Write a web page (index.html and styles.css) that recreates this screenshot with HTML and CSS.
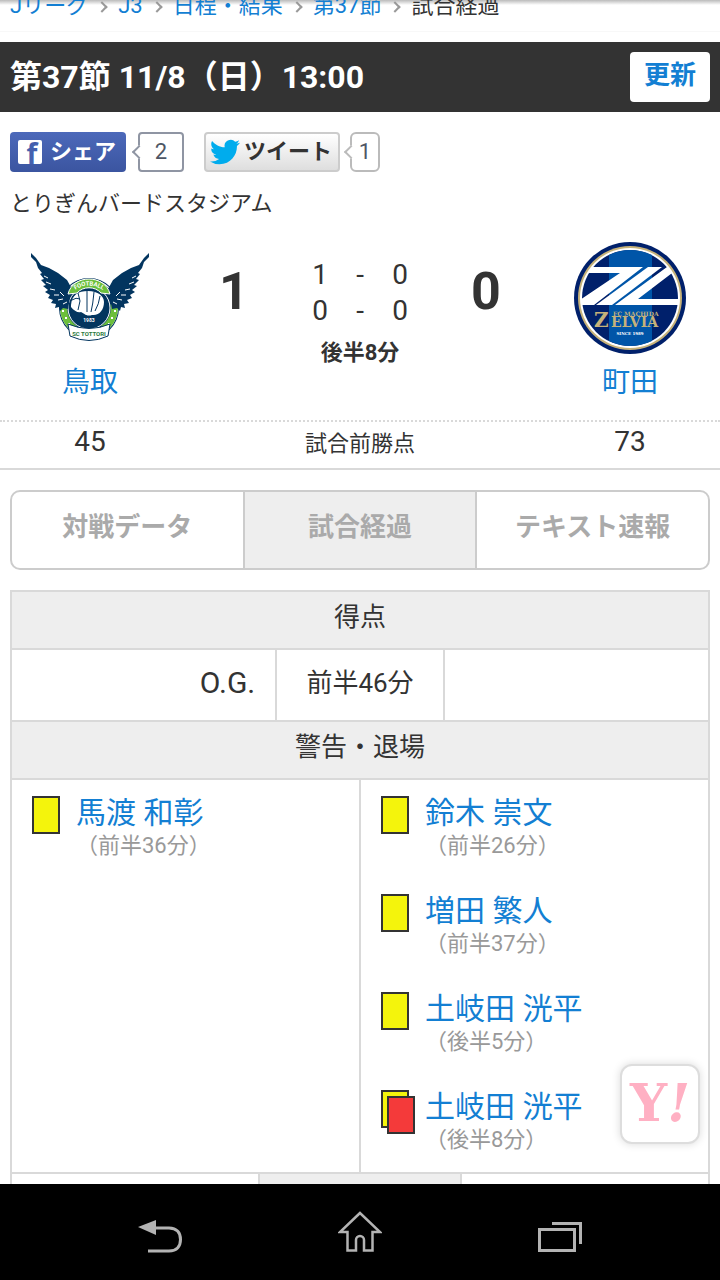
FILE: index.html
```html
<!DOCTYPE html>
<html lang="ja">

<head>
    <meta charset="utf-8">
    <meta name="viewport" content="width=device-width">
    <title>第37節 鳥取 町田</title>
    <link rel="stylesheet" href="styles.css">
</head>

<body>
    <main class="page">
        <nav class="crumbs">
            <a href="#">Jリーグ</a>
            <a href="#">J3</a>
            <a href="#">日程・結果</a>
            <a href="#">第37節</a>
            <span>試合経過</span>
        </nav>

        <header class="head">
            <h1>第37節 11/8（日）13:00</h1>
            <button type="button" class="reload">更新</button>
        </header>

        <div class="social">
            <button type="button" class="fb"><span class="fb-mark">f</span>シェア</button>
            <span class="count fb-count">2</span>
            <button type="button" class="tw">
                <svg viewBox="0 0 24 24" width="30" height="30">
                    <path fill="#00aced" d="M23.953 4.57a10 10 0 01-2.825.775 4.958 4.958 0 002.163-2.723c-.951.555-2.005.959-3.127 1.184a4.92 4.92 0 00-8.384 4.482C7.69 8.095 4.067 6.13 1.64 3.162a4.822 4.822 0 00-.666 2.475c0 1.71.87 3.213 2.188 4.096a4.904 4.904 0 01-2.228-.616v.06a4.923 4.923 0 003.946 4.827 4.996 4.996 0 01-2.212.085 4.936 4.936 0 004.604 3.417 9.867 9.867 0 01-6.102 2.105c-.39 0-.779-.023-1.17-.067a13.995 13.995 0 007.557 2.209c9.053 0 13.998-7.496 13.998-13.985 0-.21 0-.42-.015-.63A9.935 9.935 0 0024 4.59z" />
                </svg>ツイート</button>
            <span class="count tw-count">1</span>
        </div>

        <p class="stadium">とりぎんバードスタジアム</p>

        <section class="match">
            <div class="team">
                <svg class="emblem" viewBox="0 0 120 120">
                    <circle cx="59" cy="70" r="30" fill="#03355f" />
                    <circle cx="59" cy="70" r="29" fill="#fff" />
                    <circle cx="59" cy="70" r="28" fill="#03355f" />
                    <path d="M34 66a25 25 0 0 0 11 25M84 66a25 25 0 0 1-11 25" fill="none" stroke="#6cbf3c" stroke-width="7" />
                    <circle cx="59" cy="70" r="21" fill="none" stroke="#fff" />
                    <path d="M33 72v2M36 79v2M39 85v2M85 72v2M82 79v2M79 85v2" stroke="#fff" stroke-width="2" />
                    <g id="wing" fill="#03355f">
                        <path d="M1 15l5 5 5 7 8 3 9 5 9 7 5 9-2 9-2 11-5-1-3 3-1-4-4 1 1-4-5-1 2-3-5-2 2-3-5-3 3-2-5-4 3-1-5-5 3-1-4-5 2-1-4-5-2-6-5-5z" />
                        <path d="M14 38l4 2M16 44l5 2M20 51l5 1M24 57l5 0M28 62l5-1M33 66l4-2M30 54l4 4" stroke="#fff" />
                    </g>
                    <g transform="translate(120) scale(-1 1)">
                        <use href="#wing" />
                    </g>
                    <path d="M38 56C43 36 75 36 80 56L71 55C65 48 53 48 47 55Z" fill="#6cbf3c" stroke="#fff" />
                    <path id="arc" d="M41 55Q59 40 77 55" fill="none" />
                    <text class="mark-text" font-size="6" fill="#fff" text-anchor="middle">
                        <textPath href="#arc" startOffset="50%">FOOTBALL</textPath>
                    </text>
                    <path d="M41 67C42 57 48 53 58 53s16 5 16 11c0 8-5 14-12 13-6 2-8-2-11-3-3 1-7-1-10-5z" fill="#fff" />
                    <path d="M42 62q4-3 8-1M48 55l2 8-2 9M57 53v21M64 54q-1 12-3 20M70 58q-1 8-5 15" fill="none" stroke="#03355f" />
                    <text class="mark-text" x="59" y="84" font-size="5" fill="#fff" text-anchor="middle">1983</text>
                    <path d="M38 86q21 9 42 0l-2 12q-19 9-38 0z" fill="#fff" stroke="#03355f" />
                    <text class="mark-text" x="59" y="98" font-size="6" fill="#2c7a3c" text-anchor="middle">SC TOTTORI</text>
                </svg>
                <a href="#">鳥取</a>
            </div>
            <b class="score">1</b>
            <div class="detail">
                <div class="halves">
                    <span>1</span><span>-</span><span>0</span>
                    <span>0</span><span>-</span><span>0</span>
                </div>
                <b class="clock">後半8分</b>
            </div>
            <b class="score">0</b>
            <div class="team">
                <svg class="emblem" viewBox="0 0 120 120">
                    <clipPath id="disc">
                        <circle cx="60" cy="60" r="49" />
                    </clipPath>
                    <circle cx="60" cy="60" r="56" fill="#00206b" />
                    <circle cx="60" cy="60" r="52" fill="#c6b27a" />
                    <circle cx="60" cy="60" r="50" fill="#fff" />
                    <circle cx="60" cy="60" r="48" fill="#00206b" />
                    <path d="M39 17Q60 7 82 17V103Q60 113 39 103z" fill="#0055a8" />
                    <g clip-path="url(#disc)" fill="#fff">
                        <path d="M17 29H73L24 67H10V62L50 35H14z" />
                        <path d="M78 29H92L42 67H26z" />
                        <path d="M97 29H110L68 61H110V67H45z" />
                    </g>
                    <g class="zelvia">
                        <text x="24" y="89" font-size="20" fill="#c6b27a">Z</text>
                        <text x="41" y="89" font-size="14" fill="#c6b27a">ELVIA</text>
                        <text x="43" y="78" font-size="6" fill="#c6b27a">FC MACHIDA</text>
                        <text x="60" y="97" font-size="4" fill="#fff" text-anchor="middle">SINCE 1989</text>
                    </g>
                </svg>
                <a href="#">町田</a>
            </div>
        </section>

        <dl class="points">
            <dd>45</dd>
            <dt>試合前勝点</dt>
            <dd>73</dd>
        </dl>

        <nav class="tabs">
            <a href="#">対戦データ</a>
            <a href="#" class="ac">試合経過</a>
            <a href="#">テキスト速報</a>
        </nav>

        <div class="tables">
            <table class="goals">
                <colgroup>
                    <col class="side">
                    <col>
                    <col class="side">
                </colgroup>
                <tr>
                    <th colspan="3">得点</th>
                </tr>
                <tr>
                    <td class="home">O.G.</td>
                    <td class="time">前半46分</td>
                    <td></td>
                </tr>
            </table>
            <table class="bookings">
                <tr>
                    <th colspan="2">警告・退場</th>
                </tr>
                <tr>
                    <td>
                        <ul>
                            <li><i class="card"></i>
                                <div><a href="#">馬渡 和彰</a><small>（前半36分）</small></div>
                            </li>
                        </ul>
                    </td>
                    <td>
                        <ul>
                            <li><i class="card"></i>
                                <div><a href="#">鈴木 崇文</a><small>（前半26分）</small></div>
                            </li>
                            <li><i class="card"></i>
                                <div><a href="#">増田 繁人</a><small>（前半37分）</small></div>
                            </li>
                            <li><i class="card"></i>
                                <div><a href="#">土岐田 洸平</a><small>（後半5分）</small></div>
                            </li>
                            <li><i class="card second"></i>
                                <div><a href="#">土岐田 洸平</a><small>（後半8分）</small></div>
                            </li>
                        </ul>
                    </td>
                </tr>
            </table>
            <table class="stats">
                <tr>
                    <td></td>
                    <th></th>
                    <td></td>
                </tr>
            </table>
        </div>

        <a href="#" class="yahoo">Y<i>!</i></a>
    </main>

    <nav class="keys">
        <button type="button" aria-label="戻る">
            <svg viewBox="0 0 44 44" width="44" height="44">
                <path d="M0 17L18 10V25z" fill="#b3b3b3" />
                <path d="M17 18H31C39 18 42.500 23 42.500 29.500S39 41 31 41H10" fill="none" stroke="#b3b3b3" stroke-width="3" />
            </svg>
        </button>
        <button type="button" aria-label="ホーム">
            <svg viewBox="0 0 44 44" width="44" height="44">
                <path d="M22 3L2 22H9.500V40.500H18V30a4 4 0 0 1 8 0V40.500H34.500V22H42z" fill="none" stroke="#b3b3b3" stroke-width="2.500" />
            </svg>
        </button>
        <button type="button" aria-label="履歴">
            <svg viewBox="0 0 44 44" width="44" height="44">
                <path d="M1.500 19.500H36.500V40.500H1.500zM14 13.500H42.500V34" fill="none" stroke="#b3b3b3" stroke-width="3" />
            </svg>
        </button>
    </nav>
</body>

</html>
```
FILE: styles.css
```css
*,
*::before,
*::after {
    margin: 0;
    padding: 0;
    box-sizing: border-box;
}

body {
    display: flex;
    flex-direction: column;
    height: 100vh;
    font-family: Roboto, "Noto Sans CJK JP", sans-serif;
    font-size: 22px;
    line-height: 32px;
    color: #333;
    background: #fff;
}

a {
    color: #137fd3;
    text-decoration: none;
}

button {
    font: inherit;
    color: inherit;
    border: 0;
    cursor: pointer;
}

ul {
    list-style: none;
}

.page {
    flex: 1;
    min-height: 0;
    overflow: hidden;
    position: relative;
}

/* breadcrumb */
.crumbs {
    display: flex;
    height: 32px;
    line-height: 12px;
    padding: 0 10px;
    margin-bottom: 10px;
    border-bottom: 1px solid #f8f8f8;
    background: linear-gradient(#bbb, #fff 5px);
}

.crumbs a::after {
    content: "";
    display: inline-block;
    width: 8px;
    height: 8px;
    margin: 0 12px 2px 10px;
    border: solid #999;
    border-width: 2px 2px 0 0;
    transform: rotate(45deg);
}

.head {
    display: flex;
    justify-content: space-between;
    align-items: center;
    height: 70px;
    padding: 0 10px;
    background: #333;
}

.head h1 {
    font-size: 32px;
    color: #fff;
}

.reload {
    width: 80px;
    height: 50px;
    padding-bottom: 4px;
    font-size: 26px;
    font-weight: bold;
    color: #137fd3;
    background: #fff;
    border-radius: 4px;
}

/* share buttons */
.social {
    display: flex;
    padding: 20px 10px 12px;
}

.fb,
.tw {
    display: flex;
    align-items: center;
    height: 40px;
    font-weight: bold;
    border-radius: 4px;
}

.fb {
    gap: 8px;
    padding: 0 10px 0 8px;
    color: #fff;
    background: linear-gradient(#4c69ba, #3b55a0);
}

.fb-mark {
    width: 24px;
    height: 24px;
    padding-left: 4px;
    overflow: hidden;
    font: bold 28px/26px "Open Sans", sans-serif;
    color: #4460ae;
    background: #fff;
    border-radius: 2px;
}

.tw {
    gap: 4px;
    padding: 0 6px 0 4px;
    border: 2px solid #ccc;
    background: linear-gradient(#fff, #dedede);
}

.count {
    position: relative;
    height: 40px;
    line-height: 36px;
    margin-left: 12px;
    border: 2px solid #8f95a3;
    border-radius: 4px;
    text-align: center;
    color: #4e5665;
}

.fb-count {
    width: 46px;
    margin-right: 20px;
}

.tw-count {
    width: 30px;
    margin-left: 10px;
    border-color: #bbb;
    border-radius: 6px;
}

.count::before {
    content: "";
    position: absolute;
    left: -6px;
    top: 13px;
    width: 10px;
    height: 10px;
    border: solid;
    border-color: inherit;
    border-width: 0 0 2px 2px;
    background: #fff;
    transform: rotate(45deg);
}

.stadium {
    padding: 4px 10px 0;
}

/* score board */
.match {
    display: grid;
    grid-template-columns: 25% 15% 20% 15% 25%;
    padding: 18px 0 12px;
    text-align: center;
}

.emblem {
    display: block;
    width: 120px;
    height: 120px;
    margin: 0 auto;
}

.mark-text {
    font-family: Roboto, sans-serif;
    font-weight: bold;
}

.zelvia {
    font-family: "DejaVu Serif", serif;
    font-weight: bold;
}

.team a {
    display: block;
    font-size: 28px;
    line-height: 50px;
}

.score {
    padding-top: 24px;
    font-size: 52px;
    line-height: 60px;
}

.detail {
    padding-top: 19px;
}

.halves {
    display: grid;
    grid-template-columns: repeat(3, 40px);
    justify-content: center;
    font-size: 28px;
    line-height: 36px;
}

.clock {
    display: block;
    padding-top: 8px;
}

.points {
    display: grid;
    grid-template-columns: 25% 50% 25%;
    height: 50px;
    line-height: 44px;
    text-align: center;
    border-top: 2px dotted #d9d9d9;
    border-bottom: 2px solid #d9d9d9;
}

.points dd {
    font-size: 28px;
    line-height: 40px;
}

/* tabs */
.tabs {
    display: flex;
    margin: 20px 10px;
    border: 2px solid #ccc;
    border-radius: 10px;
    overflow: hidden;
}

.tabs a {
    flex: 1;
    height: 76px;
    font-size: 26px;
    font-weight: bold;
    line-height: 70px;
    text-align: center;
    color: #aaa;
}

.tabs .ac {
    background: #eee;
    border: solid #ccc;
    border-width: 0 2px;
}

/* tables */
.tables {
    padding: 0 10px;
}

table {
    width: 100%;
    table-layout: fixed;
    border-collapse: collapse;
}

table + table {
    margin-top: -2px;
}

th,
td {
    border: 2px solid #d9d9d9;
}

th {
    height: 58px;
    padding-bottom: 6px;
    font-size: 26px;
    font-weight: normal;
    background: #eee;
}

.goals .side {
    width: 38%;
}

.goals td {
    height: 72px;
    padding-bottom: 4px;
}

.goals .home {
    padding: 0 20px 4px 0;
    font-size: 30px;
    text-align: right;
}

.goals .time {
    font-size: 26px;
    text-align: center;
}

.bookings td {
    padding: 16px 20px 0;
    vertical-align: top;
}

.bookings li {
    display: flex;
    gap: 16px;
    height: 94px;
    margin-bottom: 4px;
}

.bookings li:last-child {
    margin-bottom: -12px;
}

.bookings li a {
    display: block;
    font-size: 30px;
    line-height: 34px;
}

.bookings small {
    display: block;
    font-size: 22px;
    color: #999;
}

.card {
    position: relative;
    width: 28px;
    height: 38px;
    border: 2px solid #333;
    background: #f4f40c;
}

.second::after {
    content: "";
    position: absolute;
    left: 4px;
    top: 4px;
    width: 28px;
    height: 38px;
    border: 2px solid #333;
    background: #f43a3a;
}

.stats th {
    width: 29%;
}

/* floating menu */
.yahoo {
    position: absolute;
    right: 20px;
    bottom: 40px;
    width: 80px;
    height: 80px;
    font: bold 52px/74px "DejaVu Serif", serif;
    text-align: center;
    color: #ffb0c3;
    background: #fff;
    border: 2px solid #ddd;
    border-radius: 12px;
    box-shadow: 0 0 8px rgba(0, 0, 0, 0.15);
}

/* system keys */
.keys {
    display: flex;
    height: 96px;
    padding: 0 60px;
    background: #000;
}

.keys button {
    display: flex;
    flex: 1;
    align-items: center;
    justify-content: center;
    background: none;
}
```
